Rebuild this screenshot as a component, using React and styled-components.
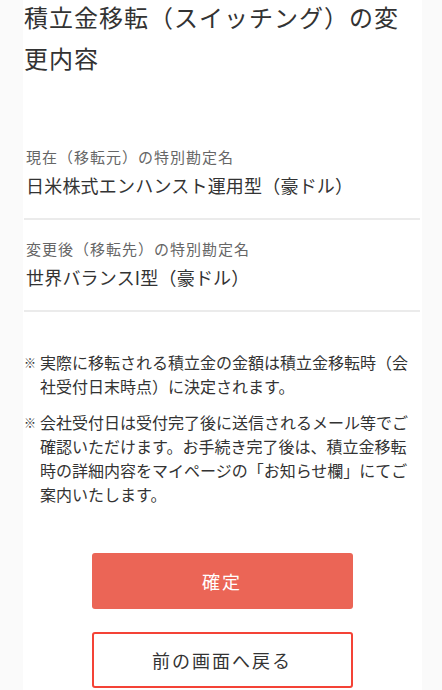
import React from 'react';
import styled, { createGlobalStyle } from 'styled-components';

const GlobalStyle = createGlobalStyle`
  html, body {
    margin: 0;
    padding: 0;
    background: #fafafa;
  }
  body {
    font-family: "Noto Sans CJK JP", "Noto Sans", sans-serif;
    color: #333;
  }
  * {
    box-sizing: border-box;
  }
`;

const Page = styled.div`
  width: 399px;
  margin-left: 23px;
  background: #fff;
  min-height: 690px;
  padding: 0 2px 0 1px;
  display: flow-root;
`;

const Title = styled.h1`
  margin: -4px 0 0;
  font-size: 24px;
  font-weight: 400;
  line-height: 41px;
  letter-spacing: 1px;
  color: #333;
`;

const InfoList = styled.div`
  margin-top: 67px;
`;

const InfoItem = styled.div`
  padding: 0 1px 17px 2px;
  margin-bottom: 17px;
  border-bottom: 2px solid #ebebeb;
`;

const Label = styled.div`
  font-size: 15px;
  line-height: 24px;
  letter-spacing: 1px;
  color: #666;
`;

const Value = styled.div`
  font-size: 18px;
  line-height: 32px;
  letter-spacing: 0.2px;
  color: #333;
`;

const Notes = styled.ul`
  list-style: none;
  margin: 38px 0 0;
  padding: 0;
`;

const Note = styled.li`
  position: relative;
  padding-left: 16px;
  font-size: 16px;
  line-height: 24px;
  color: #333;
  margin-bottom: 12px;

  &::before {
    content: '※';
    position: absolute;
    left: 0;
    top: 1px;
    font-size: 12px;
    font-weight: 700;
    color: #333;
  }
`;

const Actions = styled.div`
  display: flex;
  flex-direction: column;
  align-items: center;
  gap: 23px;
  margin-top: 47px;
`;

const Button = styled.button`
  width: 261px;
  height: 56px;
  border-radius: 3px;
  font-family: inherit;
  font-size: 18px;
  letter-spacing: 2px;
  cursor: pointer;
  background: ${p => (p.$primary ? '#eb6556' : '#fff')};
  color: ${p => (p.$primary ? '#fff' : '#333')};
  border: ${p => (p.$primary ? 'none' : '2px solid #f44336')};
`;

const App = () => {
  const items = [
    { label: '現在（移転元）の特別勘定名', value: '日米株式エンハンスト運用型（豪ドル）' },
    { label: '変更後（移転先）の特別勘定名', value: '世界バランスI型（豪ドル）' }
  ];

  return (
    <>
      <GlobalStyle />
      <Page>
        <Title>積立金移転（スイッチング）の変更内容</Title>

        <InfoList>
          {items.map(item => (
            <InfoItem key={item.label}>
              <Label>{item.label}</Label>
              <Value>{item.value}</Value>
            </InfoItem>
          ))}
        </InfoList>

        <Notes>
          <Note>実際に移転される積立金の金額は積立金移転時（会社受付日末時点）に決定されます。</Note>
          <Note>会社受付日は受付完了後に送信されるメール等でご確認いただけます。お手続き完了後は、積立金移転時の詳細内容をマイページの「お知らせ欄」にてご案内いたします。</Note>
        </Notes>

        <Actions>
          <Button $primary>確定</Button>
          <Button>前の画面へ戻る</Button>
        </Actions>
      </Page>
    </>
  );
};

export default App;
